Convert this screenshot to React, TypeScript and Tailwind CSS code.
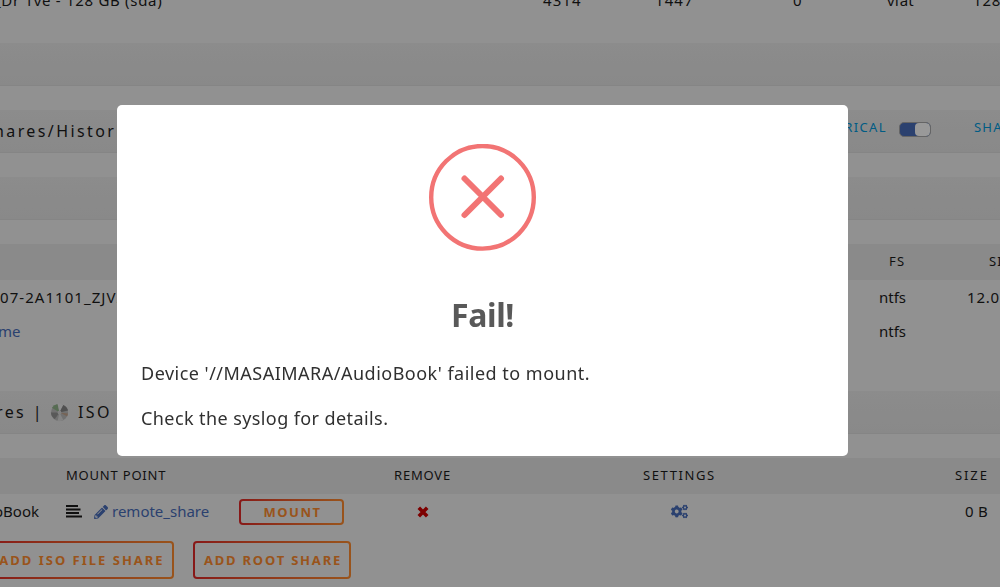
import React from 'react';
import { FaPencilAlt, FaCogs } from 'react-icons/fa';

const Band: React.FC<{ children?: React.ReactNode }> = ({ children }) => (
    <div className="h-[43px] shrink-0 mb-[24px] flex items-center border-b border-[#dedede] bg-linear-to-b from-[#e9e9e9] to-[#e5e5e5] whitespace-nowrap text-[16px] tracking-[2.4px]">
        {children}
    </div>
);

const OrangeButton: React.FC<{ label: string; className: string }> = ({ label, className }) => (
    <button
        className={`shrink-0 rounded p-[2px] bg-linear-to-r from-[#e22828] to-[#ff8c2f] whitespace-nowrap text-[13px] font-bold text-[#ff8c2f] ${className}`}
    >
        <span className="flex h-full items-center justify-center rounded-[2px] bg-[#f2f2f2] pl-[2px] pt-[1px]">{label}</span>
    </button>
);

const Toggle = () => (
    <div className="mb-[3px] flex h-[15px] w-[32px] justify-end overflow-hidden rounded-[5px] border border-[#a8a8a8] bg-[#486dba]">
        <div className="h-full w-[15px] rounded-[4px] bg-white" />
    </div>
);

const ScriptIcon = () => (
    <svg className="h-[16px] w-[16px] shrink-0" viewBox="0 0 16 16" fill="currentColor">
        <rect x="0" y="1" width="12" height="2" />
        <rect x="0" y="4.5" width="14.5" height="2" />
        <rect x="0" y="8" width="13" height="2" />
        <rect x="0" y="11.5" width="16" height="2" />
    </svg>
);

const RemoveIcon = () => (
    <svg className="ml-[73px] mt-[1px] h-[12px] w-[12px] shrink-0" viewBox="0 0 12 12" stroke="#d00000" strokeWidth="3.6">
        <path d="M1.8 1.8 10.2 10.2 M10.2 1.8 1.8 10.2" />
    </svg>
);

const FailDialog = () => (
    <div className="fixed left-[117px] top-[105px] flex h-[351px] w-[731px] flex-col items-center rounded-[5px] bg-white">
        <svg className="mt-[39px] h-[107px] w-[107px]" viewBox="0 0 107 107" fill="none" stroke="#f27474">
            <circle cx="53.5" cy="53.3" r="51.3" strokeWidth="4.4" />
            <path d="M35.5 34.5 72 71 M72 34.5 35.5 71" strokeWidth="6" strokeLinecap="round" />
        </svg>
        <h2 className="mt-[41px] text-[32px] font-bold tracking-[-0.4px] leading-[46px] text-[#595959]">Fail!</h2>
        <div className="mt-[24px] w-full pl-6 text-[18px] leading-[22.5px] text-[#303030]">
            <p className="mb-[22.5px] tracking-[0.49px]">Device '//MASAIMARA/AudioBook' failed to mount.</p>
            <p className="tracking-[0.41px]">Check the syslog for details.</p>
        </div>
    </div>
);

export default function App() {
    return (
        <div className="relative flex h-[587px] w-[1000px] flex-col overflow-hidden bg-[#f2f2f2] font-['Noto_Sans',sans-serif] text-[15px] text-[#1c1b1b]">
            {/* Disk devices */}
            <div className="-mt-[11px] flex h-[54px] shrink-0 whitespace-nowrap leading-[22px] *:shrink-0">
                <span className="-ml-[6px] w-[549px] tracking-[0.7px]">_Dr 1ve - 128 GB (sda)</span>
                <span className="w-[112px] tracking-[1.1px]">4314</span>
                <span className="w-[138px] tracking-[1.1px]">1447</span>
                <span className="w-[94px]">0</span>
                <span className="w-[86px]">vfat</span>
                <span className="tracking-[0.8px]">128 GB</span>
            </div>
            <Band />

            {/* Shares and history */}
            <Band>
                <span className="-ml-[6px] w-[832px] shrink-0">hares/Historical</span>
                <div className="flex w-[148px] shrink-0 items-center pb-[1px] text-[13px] tracking-[1.4px] text-[#0099dd]">
                    <span className="mr-[12px] flex w-[61px] justify-end pb-[5px]">TORICAL</span>
                    <Toggle />
                </div>
                <span className="pb-[6px] text-[13px] tracking-[1.2px] text-[#0099dd]">SHARES</span>
            </Band>
            <Band />
            <div className="flex h-[36px] shrink-0 items-center pb-[1px] bg-[#e7e7e7] text-[13px] tracking-[1.2px] *:shrink-0">
                <span className="w-[989px] pl-[889px]">FS</span>
                <span>SIZE</span>
            </div>
            <div className="flex h-[35px] shrink-0 items-center whitespace-nowrap *:shrink-0">
                <span className="w-[879px] tracking-[1.05px]">07-2A1101_ZJV2</span>
                <span className="w-[88px]">ntfs</span>
                <span className="tracking-[0.8px]">12.0 TB</span>
            </div>
            <div className="flex h-[76px] shrink-0 items-start pt-[5px] whitespace-nowrap *:shrink-0">
                <span className="-ml-[2px] w-[881px] text-[#486dba]">me</span>
                <span className="w-[120px]">ntfs</span>
            </div>

            {/* Remote and ISO shares */}
            <Band>
                <span className="-ml-[4px]">res |</span>
                <svg className="ml-[6px] mr-[9px] h-[19px] w-[19px]" viewBox="0 0 20 20">
                    <circle cx="10" cy="10" r="9" fill="#bdbdbd" />
                    <path d="M10 10 2 5 A9 9 0 0 1 8 1Z" fill="#91b58a" />
                    <path d="M10 10 8 1 A9 9 0 0 1 14 2Z" fill="#ededed" />
                    <path d="M10 10 14 2 A9 9 0 0 1 19 8Z" fill="#858585" />
                    <path d="M10 10 1 10 A9 9 0 0 0 5 17Z" fill="#959595" />
                    <path d="M10 10 8 19 A9 9 0 0 0 14 18Z" fill="#dcdcdc" />
                    <path d="M10 10 18 14 A9 9 0 0 0 19 11Z" fill="#c4a58e" />
                    <circle cx="10" cy="10" r="2" fill="#d8d8d8" />
                </svg>
                <span>ISO</span>
            </Band>
            <div className="flex h-[36px] shrink-0 items-center pb-[1px] whitespace-nowrap bg-[#e7e7e7] text-[13px] *:shrink-0">
                <span className="w-[394px] pl-[66px] tracking-[0.8px]">MOUNT POINT</span>
                <span className="w-[249px] tracking-[0.8px]">REMOVE</span>
                <span className="w-[312px] tracking-[1.6px]">SETTINGS</span>
                <span className="tracking-[1.9px]">SIZE</span>
            </div>
            <div className="flex h-[36px] shrink-0 items-center pb-[1px] whitespace-nowrap *:shrink-0">
                <span className="-ml-[6px] w-[72px]">oBook</span>
                <ScriptIcon />
                <span className="ml-[12px] flex w-[145px] items-center gap-[4px] text-[#486dba]">
                    <FaPencilAlt size={14} />
                    remote_share
                </span>
                <OrangeButton label="MOUNT" className="mt-[1px] h-[26px] w-[105px] tracking-[1.5px]" />
                <RemoveIcon />
                <FaCogs className="ml-[242px] text-[#486dba]" size={17} />
                <span className="ml-[277px] tracking-[0.3px]">0 B</span>
            </div>
            <div className="flex shrink-0 gap-[19px] pt-[11px]">
                <OrangeButton label="ADD ISO FILE SHARE" className="-ml-[12px] h-[38px] w-[186px] tracking-[2px]" />
                <OrangeButton label="ADD ROOT SHARE" className="h-[38px] w-[158px] tracking-[1.8px]" />
            </div>

            <div className="fixed inset-0 bg-black/40" />
            <FailDialog />
        </div>
    );
}
